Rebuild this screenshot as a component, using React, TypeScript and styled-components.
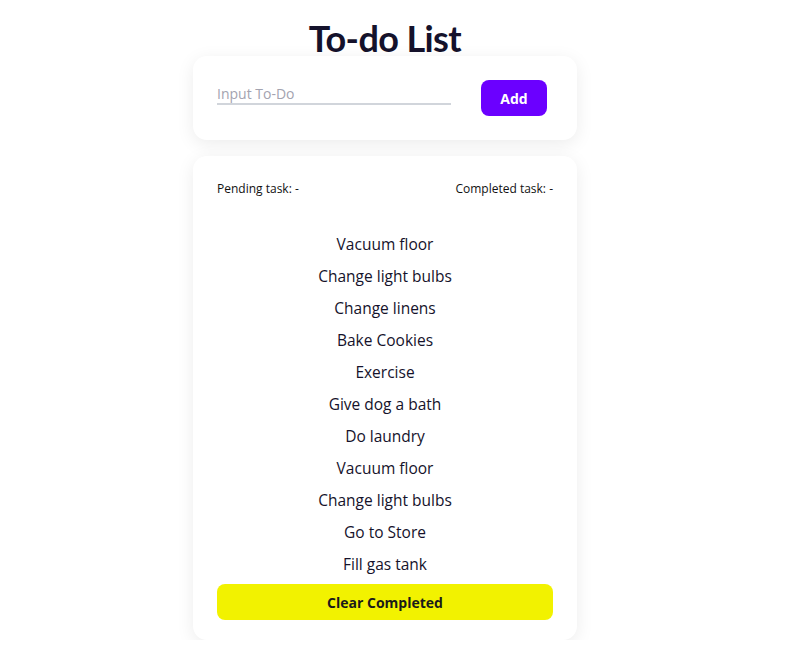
import React from "react";
import styled, { createGlobalStyle } from "styled-components";

const Global = createGlobalStyle`
  html, body { margin: 0; padding: 0; background: #ffffff; }
  body { font-family: "Open Sans", "Noto Sans", sans-serif; color: #111111; }
  * { box-sizing: border-box; }
`;

const Page = styled.div`
  width: 770px;
  display: flex;
  flex-direction: column;
  align-items: center;
`;

const Title = styled.h1`
  margin: 18px 0 0 0;
  height: 38px;
  line-height: 40px;
  font-family: "Lato", "Open Sans", sans-serif;
  font-size: 36px;
  font-weight: 700;
  color: #15122b;
  letter-spacing: -0.6px;
`;

const Card = styled.div<{ $mt?: number; $pb?: number }>`
  width: 384px;
  margin-top: ${(p) => p.$mt ?? 0}px;
  background: #ffffff;
  border-radius: 14px;
  box-shadow: 0 4px 18px rgba(0, 0, 0, 0.08);
  padding: 24px 24px ${(p) => p.$pb ?? 24}px 24px;
`;

const InputRow = styled.div`
  display: flex;
  align-items: flex-start;
  gap: 30px;
  height: 36px;
`;

const TodoInput = styled.input`
  width: 234px;
  height: 24px;
  margin-top: 1px;
  border: none;
  border-bottom: 2px solid #d1d5db;
  outline: none;
  padding: 2px 0 0 0;
  font-family: inherit;
  font-size: 14px;
  color: #111;
  background: transparent;
  &::placeholder { color: #a3a3b0; }
`;

const Button = styled.button<{ $bg: string; $fg: string; $w?: string }>`
  width: ${(p) => p.$w ?? "66px"};
  height: 36px;
  border: none;
  border-radius: 8px;
  background: ${(p) => p.$bg};
  color: ${(p) => p.$fg};
  font-family: inherit;
  font-weight: 700;
  font-size: 14px;
  cursor: pointer;
`;

const Stats = styled.div`
  display: flex;
  justify-content: space-between;
  font-size: 12px;
  line-height: 18px;
  color: #111;
`;

const List = styled.ul`
  list-style: none;
  margin: 30px 0 4px 0;
  padding: 0;
`;

const Item = styled.li`
  height: 32px;
  line-height: 32px;
  text-align: center;
  font-size: 15.5px;
  color: #15122b;
`;

const items = [
  "Vacuum floor",
  "Change light bulbs",
  "Change linens",
  "Bake Cookies",
  "Exercise",
  "Give dog a bath",
  "Do laundry",
  "Vacuum floor",
  "Change light bulbs",
  "Go to Store",
  "Fill gas tank",
];

export default function App() {
  return (
    <Page>
      <Global />
      <Title>To-do List</Title>
      <Card>
        <InputRow>
          <TodoInput placeholder="Input To-Do" />
          <Button $bg="#6b00ff" $fg="#ffffff">Add</Button>
        </InputRow>
      </Card>
      <Card $mt={16} $pb={20}>
        <Stats>
          <span>Pending task: -</span>
          <span>Completed task: -</span>
        </Stats>
        <List>
          {items.map((t, i) => (
            <Item key={i}>{t}</Item>
          ))}
        </List>
        <Button $bg="#f2f200" $fg="#1a1a1a" $w="100%">Clear Completed</Button>
      </Card>
    </Page>
  );
}
